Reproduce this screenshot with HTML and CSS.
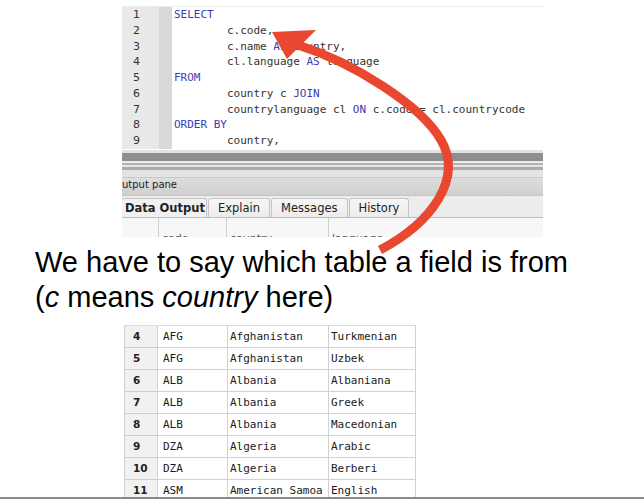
FILE: index.html
```html
<!DOCTYPE html>
<html>
<head>
<meta charset="utf-8">
<link rel="stylesheet" href="styles.css">
</head>
<body>
<div class="page">
  <div class="shot">
    <div class="editor">
      <div class="gutter">
        <div>1</div><div>2</div><div>3</div><div>4</div><div>5</div><div>6</div><div>7</div><div>8</div><div>9</div>
      </div>
      <div class="fold"></div>
<pre class="code"><span class="kw">SELECT</span>
        c.code,
        c.name <span class="kw">AS</span> country,
        cl.language <span class="kw">AS</span> language
<span class="kw">FROM</span>
        country c <span class="kw">JOIN</span>
        countrylanguage cl <span class="kw">ON</span> c.code = cl.countrycode
<span class="kw">ORDER BY</span>
        country,</pre>
    </div>
    <div class="splitter">
      <div class="s1"></div><div class="s2"></div><div class="s3"></div><div class="s4"></div><div class="s5"></div><div class="s6"></div><div class="s7"></div>
    </div>
    <div class="pane-title">utput pane</div>
    <div class="tabs">
      <div class="tab active">Data Output</div>
      <div class="tab">Explain</div>
      <div class="tab">Messages</div>
      <div class="tab">History</div>
    </div>
    <div class="grid-head">
      <div class="gh gh-num"></div>
      <div class="gh gh-code">code</div>
      <div class="gh gh-country">country</div>
      <div class="gh gh-lang">language</div>
    </div>
  </div>

  <p class="caption">We have to say which table a field is from<br>(<em>c</em> means <em>country</em> here)</p>

  <div class="results-wrap">
    <div class="results">
      <div class="n">4</div><div class="c code">AFG</div><div class="c">Afghanistan</div><div class="c">Turkmenian</div>
      <div class="n">5</div><div class="c code">AFG</div><div class="c">Afghanistan</div><div class="c">Uzbek</div>
      <div class="n">6</div><div class="c code">ALB</div><div class="c">Albania</div><div class="c">Albaniana</div>
      <div class="n">7</div><div class="c code">ALB</div><div class="c">Albania</div><div class="c">Greek</div>
      <div class="n">8</div><div class="c code">ALB</div><div class="c">Albania</div><div class="c">Macedonian</div>
      <div class="n">9</div><div class="c code">DZA</div><div class="c">Algeria</div><div class="c">Arabic</div>
      <div class="n">10</div><div class="c code">DZA</div><div class="c">Algeria</div><div class="c">Berberi</div>
      <div class="n">11</div><div class="c code">ASM</div><div class="c">American Samoa</div><div class="c">English</div>
    </div>
  </div>
  <div class="bottom-rule"></div>

  <svg class="arrow" width="644" height="502" viewBox="0 0 644 502">
    <path d="M380,250 C433,222 463,178 441,140 C421,105 352,62 298,45" fill="none" stroke="#e9472f" stroke-width="9"/>
    <polygon points="272,32 316,30 287,59" fill="#e9472f"/>
  </svg>
</div>
</body>
</html>
```

FILE: styles.css
```css
html, body {
  margin: 0;
  padding: 0;
  background: #ffffff;
}

.page {
  position: relative;
  width: 644px;
  height: 502px;
  overflow: hidden;
  display: flex;
  flex-direction: column;
}

.shot {
  margin-left: 122px;
  width: 421px;
  height: 237px;
  padding-top: 6px;
  box-sizing: border-box;
  overflow: hidden;
  display: flex;
  flex-direction: column;
}

.editor {
  display: flex;
  border-top: 1px solid #ededed;
  background: #ffffff;
  padding-bottom: 1px;
}

.gutter {
  width: 37px;
  box-sizing: border-box;
  padding-left: 11px;
  background: #e9e9e9;
  font-family: "DejaVu Sans", sans-serif;
  font-size: 11px;
  line-height: 15.75px;
  color: #333333;
}

.fold {
  width: 13px;
  background: #d9d9d9;
}

.code {
  margin: 0;
  padding-left: 2px;
  flex: 1;
  font-family: "DejaVu Sans Mono", monospace;
  font-size: 11px;
  line-height: 15.75px;
  color: #333333;
  white-space: pre;
}

.kw {
  color: #3b3bb3;
}

.splitter {
  display: flex;
  flex-direction: column;
}
.s1 { height: 3px; background: #e2e2e2; }
.s2 { height: 8px; background: #8e8e8e; }
.s3 { height: 2px; background: #ececec; }
.s4 { height: 2px; background: #b4b4b4; }
.s5 { height: 2px; background: #e6e6e6; }
.s6 { height: 3px; background: #acacac; }
.s7 { height: 7px; background: #e4e4e4; }

.pane-title {
  height: 17px;
  border-top: 1px solid #c8c8c8;
  background: linear-gradient(#dedede, #cfcfcf);
  font-family: "DejaVu Sans", sans-serif;
  font-size: 10px;
  line-height: 14px;
  color: #222222;
  padding-left: 0;
}

.tabs {
  height: 23px;
  box-sizing: border-box;
  background: #ececec;
  border-top: 1px solid #c4c4c4;
  border-bottom: 1px solid #bdbdbd;
  display: flex;
  align-items: flex-end;
  gap: 1px;
}

.tab {
  height: 19px;
  box-sizing: border-box;
  padding: 0 9px;
  border: 1px solid #c6c6c6;
  border-bottom: none;
  border-radius: 3px 3px 0 0;
  background: linear-gradient(#f6f6f6, #ececec);
  font-family: "DejaVu Sans", sans-serif;
  font-size: 11.5px;
  line-height: 18px;
  color: #222222;
}

.tab.active {
  width: 85px;
  padding: 0 0 0 3px;
  border-left: none;
  font-weight: bold;
  background: #f0f0f0;
}

.grid-head {
  flex: 1;
  display: flex;
  background: #f7f7f7;
  overflow: hidden;
}

.gh {
  box-sizing: border-box;
  border-right: 1px solid #cfcfcf;
  padding: 14px 0 0 3px;
  font-family: "DejaVu Sans", sans-serif;
  font-size: 11px;
  color: #555555;
}
.gh-num { width: 37px; }
.gh-code { width: 68px; }
.gh-country { width: 102px; }
.gh-lang { flex: 1; border-right: none; }

.caption {
  margin: 8px 0 0 35px;
  font-family: "Liberation Sans", Arial, sans-serif;
  font-size: 29px;
  line-height: 35px;
  color: #000000;
}

.results-wrap {
  margin: 10px 0 0 124px;
  height: 172px;
  overflow: hidden;
}

.results {
  display: grid;
  grid-template-columns: 33px 70px 101px 87px;
  grid-auto-rows: 22px;
  width: 292px;
  border-top: 1px solid #dcdcdc;
  border-left: 1px solid #d0d0d0;
  box-sizing: border-box;
}

.results > div {
  box-sizing: border-box;
  border-right: 1px solid #d0d0d0;
  border-bottom: 1px solid #d0d0d0;
  line-height: 21px;
  white-space: nowrap;
  overflow: hidden;
}

.n {
  background: #f1f1f1;
  padding-left: 8px;
  font-family: "DejaVu Sans", sans-serif;
  font-weight: bold;
  font-size: 10.5px;
  color: #222222;
}

.c {
  padding-left: 2px;
  font-family: "DejaVu Sans Mono", monospace;
  font-size: 11px;
  color: #1a1a1a;
}

.c.code {
  padding-left: 5px;
}

.bottom-rule {
  height: 2px;
  background: #8a8a8a;
}

.arrow {
  position: absolute;
  left: 0;
  top: 0;
  pointer-events: none;
}
```
